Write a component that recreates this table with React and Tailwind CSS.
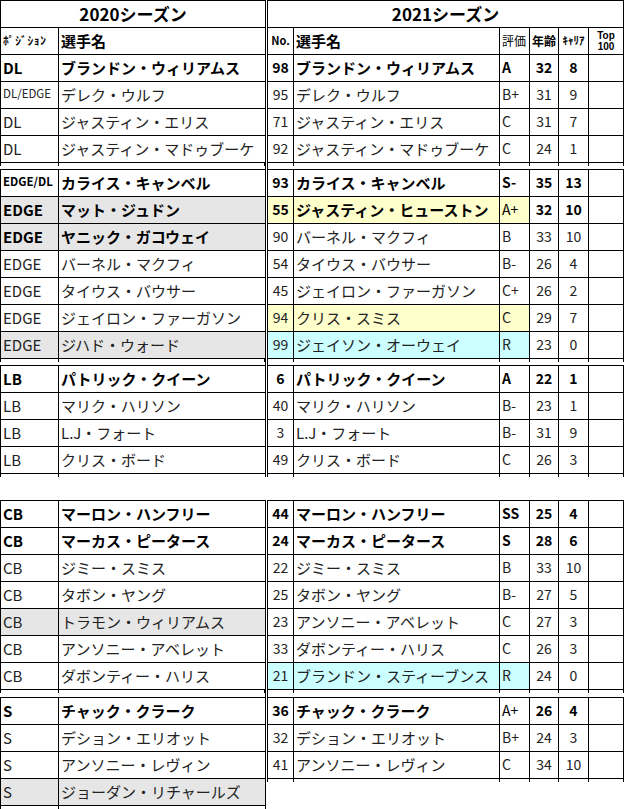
import React from 'react';

const L = 'border-black';

const left = [
  [
    { pos: 'DL', name: 'ブランドン・ウィリアムス', bold: true },
    { pos: 'DL/EDGE', small: true, name: 'デレク・ウルフ' },
    { pos: 'DL', name: 'ジャスティン・エリス' },
    { pos: 'DL', name: 'ジャスティン・マドゥブーケ' },
  ],
  [
    { pos: 'EDGE/DL', small: true, name: 'カライス・キャンベル', bold: true },
    { pos: 'EDGE', name: 'マット・ジュドン', bold: true, grey: true },
    { pos: 'EDGE', name: 'ヤニック・ガコウェイ', bold: true, grey: true },
    { pos: 'EDGE', name: 'バーネル・マクフィ' },
    { pos: 'EDGE', name: 'タイウス・バウサー' },
    { pos: 'EDGE', name: 'ジェイロン・ファーガソン' },
    { pos: 'EDGE', name: 'ジハド・ウォード', grey: true },
  ],
  [
    { pos: 'LB', name: 'パトリック・クイーン', bold: true },
    { pos: 'LB', name: 'マリク・ハリソン' },
    { pos: 'LB', name: 'L.J・フォート' },
    { pos: 'LB', name: 'クリス・ボード' },
  ],
  [
    { pos: 'CB', name: 'マーロン・ハンフリー', bold: true },
    { pos: 'CB', name: 'マーカス・ピータース', bold: true },
    { pos: 'CB', name: 'ジミー・スミス' },
    { pos: 'CB', name: 'タボン・ヤング' },
    { pos: 'CB', name: 'トラモン・ウィリアムス', grey: true },
    { pos: 'CB', name: 'アンソニー・アベレット' },
    { pos: 'CB', name: 'ダボンティー・ハリス' },
  ],
  [
    { pos: 'S', name: 'チャック・クラーク', bold: true },
    { pos: 'S', name: 'デション・エリオット' },
    { pos: 'S', name: 'アンソニー・レヴィン' },
    { pos: 'S', name: 'ジョーダン・リチャールズ', grey: true },
  ],
];

const right = [
  [
    { no: '98', name: 'ブランドン・ウィリアムス', grade: 'A', age: '32', car: '8', bold: true, gb: true },
    { no: '95', name: 'デレク・ウルフ', grade: 'B+', age: '31', car: '9' },
    { no: '71', name: 'ジャスティン・エリス', grade: 'C', age: '31', car: '7' },
    { no: '92', name: 'ジャスティン・マドゥブーケ', grade: 'C', age: '24', car: '1' },
  ],
  [
    { no: '93', name: 'カライス・キャンベル', grade: 'S-', age: '35', car: '13', bold: true, gb: true },
    { no: '55', name: 'ジャスティン・ヒューストン', grade: 'A+', age: '32', car: '10', bold: true, fill: 'yellow' },
    { no: '90', name: 'バーネル・マクフィ', grade: 'B', age: '33', car: '10' },
    { no: '54', name: 'タイウス・バウサー', grade: 'B-', age: '26', car: '4' },
    { no: '45', name: 'ジェイロン・ファーガソン', grade: 'C+', age: '26', car: '2' },
    { no: '94', name: 'クリス・スミス', grade: 'C', age: '29', car: '7', fill: 'yellow' },
    { no: '99', name: 'ジェイソン・オーウェイ', grade: 'R', age: '23', car: '0', fill: 'cyan' },
  ],
  [
    { no: '6', name: 'パトリック・クイーン', grade: 'A', age: '22', car: '1', bold: true, gb: true },
    { no: '40', name: 'マリク・ハリソン', grade: 'B-', age: '23', car: '1' },
    { no: '3', name: 'L.J・フォート', grade: 'B-', age: '31', car: '9' },
    { no: '49', name: 'クリス・ボード', grade: 'C', age: '26', car: '3' },
  ],
  [
    { no: '44', name: 'マーロン・ハンフリー', grade: 'SS', age: '25', car: '4', bold: true, gb: true },
    { no: '24', name: 'マーカス・ピータース', grade: 'S', age: '28', car: '6', bold: true, gb: true },
    { no: '22', name: 'ジミー・スミス', grade: 'B', age: '33', car: '10' },
    { no: '25', name: 'タボン・ヤング', grade: 'B-', age: '27', car: '5' },
    { no: '23', name: 'アンソニー・アベレット', grade: 'C', age: '27', car: '3' },
    { no: '33', name: 'ダボンティー・ハリス', grade: 'C', age: '26', car: '3' },
    { no: '21', name: 'ブランドン・スティーブンス', grade: 'R', age: '24', car: '0', fill: 'cyan' },
  ],
  [
    { no: '36', name: 'チャック・クラーク', grade: 'A+', age: '26', car: '4', bold: true },
    { no: '32', name: 'デション・エリオット', grade: 'B+', age: '24', car: '3' },
    { no: '41', name: 'アンソニー・レヴィン', grade: 'C', age: '34', car: '10' },
  ],
];

const fills = { yellow: 'bg-[#ffffcc]', cyan: 'bg-[#ccffff]' };

const LeftRow = ({ r }) => {
  const bg = r.grey ? 'bg-[#e6e6e6]' : 'bg-white';
  const weight = r.bold ? 'font-bold text-black' : 'font-normal text-[#222]';
  return (
    <div className={`flex h-[27px] border-b ${L} ${weight}`}>
      <div className={`w-[59px] border-l border-r ${L} ${bg} flex items-center pl-[2px] pb-[2px] whitespace-nowrap ${r.small ? 'text-[11.5px]' : 'text-[15px]'}`}>
        {r.pos}
      </div>
      <div className={`w-[207px] border-r ${L} ${bg} flex items-center pl-[2px] pb-[2px] text-[15px] whitespace-nowrap`}>
        {r.name}
      </div>
    </div>
  );
};

const RightRow = ({ r }) => {
  const bg = r.fill ? fills[r.fill] : 'bg-white';
  const weight = r.bold ? 'font-bold text-black' : 'font-normal text-[#222]';
  return (
    <div className={`flex h-[27px] border-b ${L} ${weight}`}>
      <div className={`w-[27px] border-l border-r ${L} ${bg} flex items-center justify-center pb-[2px] text-[14px]`}>{r.no}</div>
      <div className={`w-[206px] border-r ${L} ${bg} flex items-center pl-[2px] pb-[2px] text-[15px] whitespace-nowrap`}>{r.name}</div>
      <div className={`w-[30px] border-r ${L} ${bg} flex items-center pl-[2px] pb-[2px] text-[14px] ${r.gb ? 'font-bold' : 'font-normal'}`}>{r.grade}</div>
      <div className={`w-[29px] border-r ${L} flex items-center justify-center pb-[2px] text-[14px]`}>{r.age}</div>
      <div className={`w-[30px] border-r ${L} flex items-center justify-center pb-[2px] text-[14px]`}>{r.car}</div>
      <div className={`w-[35px] border-r ${L}`} />
    </div>
  );
};

const LeftTicks = () => (
  <div className="h-[3px] flex">
    <div className={`w-[59px] border-l border-r ${L}`} />
    <div className={`w-[207px] border-r ${L}`} />
  </div>
);

const RightTicks = () => (
  <div className="h-[3px] flex">
    <div className={`w-[27px] border-l border-r ${L}`} />
    <div className={`w-[206px] border-r ${L}`} />
    <div className={`w-[30px] border-r ${L}`} />
    <div className={`w-[29px] border-r ${L}`} />
    <div className={`w-[30px] border-r ${L}`} />
    <div className={`w-[35px] border-r ${L}`} />
  </div>
);

// gap heights after each group
const gaps = ['h-[6px]', 'h-[6px]', 'h-[26px]', 'h-[7px]'];

const App = () => {
  return (
    <div className="w-[630px] h-[809px] bg-white overflow-hidden flex items-start font-['Noto_Sans_CJK_JP','Noto_Sans',sans-serif] leading-none">
      {/* 2020 season */}
      <div className="w-[266px] flex flex-col">
        <div className={`h-[28px] border-t border-b border-l border-r ${L} flex items-center justify-center pb-[2px] font-bold text-[17px] text-black`}>
          2020シーズン
        </div>
        <div className={`flex h-[27px] border-b ${L} font-bold text-black`}>
          <div className={`w-[59px] border-l border-r ${L} flex items-center pl-[2px] pb-[1px] text-[11.5px] tracking-[0.7px] whitespace-nowrap`}>ﾎﾟｼﾞｼｮﾝ</div>
          <div className={`w-[207px] border-r ${L} flex items-center pl-[2px] pb-[2px] text-[15px]`}>選手名</div>
        </div>
        {left.map((g, gi) => (
          <React.Fragment key={gi}>
            {gi > 0 && <div className={`border-t ${L}`} />}
            {g.map((r, ri) => (
              <LeftRow key={ri} r={r} />
            ))}
            {gi < gaps.length ? (
              <div className={`${gaps[gi]} ${gi === 2 ? '' : 'border-r ' + L}`}>
                <LeftTicks />
              </div>
            ) : (
              <LeftTicks />
            )}
          </React.Fragment>
        ))}
      </div>

      {/* 2021 season */}
      <div className="w-[357px] ml-[1px] flex flex-col">
        <div className={`h-[28px] border-t border-b border-l border-r ${L} flex items-center justify-center pb-[2px] font-bold text-[17px] text-black`}>
          2021シーズン
        </div>
        <div className={`flex h-[27px] border-b ${L} text-black`}>
          <div className={`w-[27px] border-l border-r ${L} flex items-center justify-center pb-[1px] font-bold text-[11px]`}>No.</div>
          <div className={`w-[206px] border-r ${L} flex items-center pl-[2px] pb-[2px] font-bold text-[15px]`}>選手名</div>
          <div className={`w-[30px] border-r ${L} flex items-center pl-[2px] pb-[1px] text-[12px] text-black`}>評価</div>
          <div className={`w-[29px] border-r ${L} flex items-center justify-center pb-[1px] font-bold text-[12px]`}>年齢</div>
          <div className={`w-[30px] border-r ${L} flex items-center justify-center pb-[1px] font-bold text-[11px] whitespace-nowrap`}>ｷｬﾘｱ</div>
          <div className={`w-[35px] border-r ${L} flex flex-col items-center justify-center font-bold text-[10px] leading-[11px] font-['Liberation_Sans',sans-serif]`}>
            <span>Top</span>
            <span>100</span>
          </div>
        </div>
        {right.map((g, gi) => (
          <React.Fragment key={gi}>
            {gi > 0 && <div className={`border-t ${L}`} />}
            {g.map((r, ri) => (
              <RightRow key={ri} r={r} />
            ))}
            {gi < gaps.length ? (
              <div className={`${gaps[gi]} ${gi === 2 ? '' : 'border-l ' + L}`}>
                {gi === 2 ? <RightTicks /> : <div className="h-[3px] flex -ml-[1px]"><RightTicks /></div>}
              </div>
            ) : (
              <RightTicks />
            )}
          </React.Fragment>
        ))}
      </div>
    </div>
  );
};

export default App;
